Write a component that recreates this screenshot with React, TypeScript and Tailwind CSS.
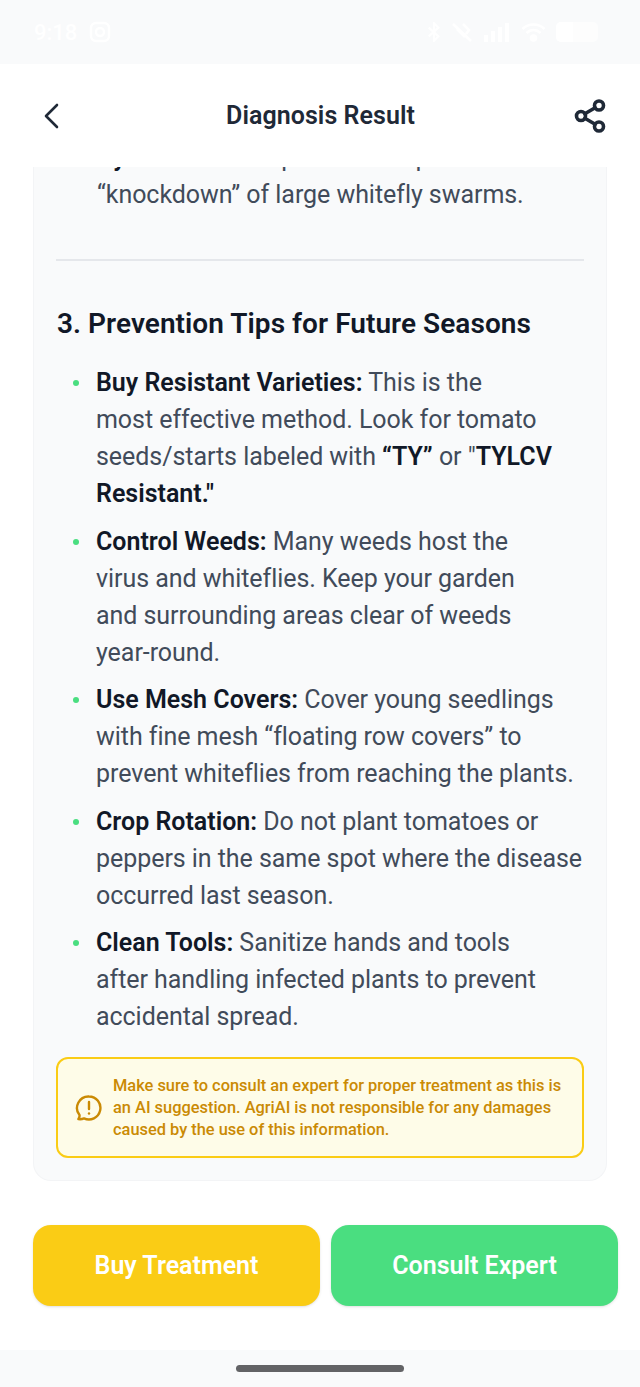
import React from "react";
import { Share2 } from "lucide-react";

const strong = "font-semibold text-[#111827] tracking-[0px]";

const tips = [
  { title: "Buy Resistant Varieties:", body: (
    <>This is the<br />most effective method. Look for tomato<br />seeds/starts labeled with <b className={strong}>“TY”</b> or "<b className={strong}>TYLCV</b><br /><b className={strong}>Resistant."</b></>
  ) },
  { title: "Control Weeds:", body: <>Many weeds host the<br />virus and whiteflies. Keep your garden<br />and surrounding areas clear of weeds<br />year-round.</> },
  { title: "Use Mesh Covers:", body: <>Cover young seedlings<br />with fine mesh “floating row covers” to<br />prevent whiteflies from reaching the plants.</> },
  { title: "Crop Rotation:", body: <>Do not plant tomatoes or<br />peppers in the same spot where the disease<br />occurred last season.</> },
  { title: "Clean Tools:", body: <>Sanitize hands and tools<br />after handling infected plants to prevent<br />accidental spread.</> },
];

function StatusBar() {
  return (
    <div className="h-16 shrink-0 bg-[#f9fafb] flex items-center justify-between pl-[34px] pr-[42px] text-white">
      <div className="flex items-center gap-3">
        <span className="text-[22px] font-medium">9:18</span>
        <svg width="22" height="24" viewBox="0 0 22 24" fill="none" stroke="currentColor" strokeWidth="2.4">
          <rect x="2" y="3" width="18" height="18" rx="5" />
          <circle cx="11" cy="12" r="4" />
        </svg>
      </div>
      <div className="flex items-center gap-[10px]">
        <svg width="14" height="20" viewBox="0 0 16 22" fill="none" stroke="currentColor" strokeWidth="2.4">
          <path d="M2 6l11 10-5 5V1l5 5L2 16" />
        </svg>
        <svg width="22" height="22" viewBox="0 0 22 22" fill="none" stroke="currentColor" strokeWidth="2.6">
          <path d="M2 3l18 17M6 8l8 8M12 3l6 6-3 4" />
        </svg>
        <svg width="28" height="22" viewBox="0 0 28 22" fill="currentColor">
          <rect x="1" y="14" width="4" height="7" />
          <rect x="8" y="10" width="4" height="11" />
          <rect x="15" y="6" width="4" height="15" />
          <rect x="22" y="2" width="4" height="19" />
        </svg>
        <svg width="25" height="20" viewBox="0 0 24 20" fill="none" stroke="currentColor" strokeWidth="2.6">
          <path d="M1 7c6-6 16-6 22 0M5 11c4-4 10-4 14 0" />
          <circle cx="12" cy="16" r="2.5" fill="currentColor" />
        </svg>
        <div className="w-[42px] h-[20px] rounded-[5px] bg-white/60 overflow-hidden">
          <div className="w-[17px] h-full bg-white" />
        </div>
      </div>
    </div>
  );
}

export default function App() {
  return (
    <div className="w-[640px] h-[1387px] bg-white flex flex-col overflow-hidden font-['Roboto',sans-serif]">
      <StatusBar />

      <header className="h-[103px] shrink-0 flex items-center justify-between pl-[43px] pr-[32px] pt-[1px]">
        <span className="w-[26px]">
          <svg width="16" height="26" viewBox="0 0 16 26" fill="none" stroke="#1f2937" strokeWidth="2.6" strokeLinecap="round" strokeLinejoin="round">
            <path d="M14 2L3 13l11 11" />
          </svg>
        </span>
        <h1 className="text-[25px] font-semibold text-[#1f2937] tracking-[0.05px]">Diagnosis Result</h1>
        <Share2 size={36} strokeWidth={2.4} className="text-[#1f2937]" />
      </header>

      <main className="h-[1014px] shrink-0 overflow-hidden px-[33px]">
        <section className="h-full bg-[#f9fafb] rounded-b-[18px] border-b border-x border-[#f3f4f6] px-[22px] flex flex-col">
          <p className="mt-[-28px] pl-[41px] text-[25px] leading-[37px] text-[#414b5a] tracking-[-0.05px]">
            <b className={strong}>Pyrethrin:</b> Best spot use for quick
            <br />
            “knockdown” of large whitefly swarms.
          </p>
          <hr className="mt-[46px] border-0 h-[2px] bg-[#e5e7eb]" />

          <h2 className="mt-[44px] pl-[1px] text-[28px] leading-[38px] font-semibold text-[#111827] tracking-[0.05px]">
            3. Prevention Tips for Future Seasons
          </h2>

          <ul className="mt-[21px] flex flex-col gap-[10.5px]">
            {tips.map((t) => (
              <li key={t.title} className="flex text-[25px] leading-[37px] text-[#414b5a] tracking-[-0.05px]">
                <span className="w-[40px] shrink-0 pl-[17px] pt-[16px]">
                  <span className="block w-[6px] h-[6px] rounded-full bg-[#4ade80]" />
                </span>
                <div>
                  <b className={strong}>{t.title}</b> {t.body}
                </div>
              </li>
            ))}
          </ul>

          <aside className="mt-[22px] h-[101px] rounded-[12px] border-2 border-[#facc15] bg-[#fefce8] flex items-center pl-[17px] pr-[6px] gap-[10px]">
            <svg width="28" height="28" viewBox="0 0 28 28" fill="none" stroke="#ca8a04" strokeWidth="2.4" className="shrink-0">
              <path d="M14 2.5a11.5 11.5 0 1 1-5 21.9c-2 .9-3.8 1-5.6.7 1-1.3 1.3-2.6 1.1-4A11.5 11.5 0 0 1 14 2.5z" strokeLinejoin="round" />
              <path d="M14 8v7" strokeLinecap="round" />
              <circle cx="14" cy="19.5" r="1.2" fill="#ca8a04" stroke="none" />
            </svg>
            <p className="text-[16.4px] leading-[22px] font-medium text-[#ca8a04]">
              Make sure to consult an expert for proper treatment as this is an AI suggestion. AgriAI is not responsible for any damages caused by the use of this information.
            </p>
          </aside>
        </section>
      </main>

      <div className="h-[169px] shrink-0 pl-[33px] pr-[22px] pt-[44px] flex gap-[11px] items-start">
        <button className="flex-1 h-[81px] rounded-[18px] bg-[#facc15] text-white text-[25px] font-semibold shadow-sm">Buy Treatment</button>
        <button className="flex-1 h-[81px] rounded-[18px] bg-[#4ade80] text-white text-[25px] font-semibold shadow-sm">Consult Expert</button>
      </div>

      <div className="flex-1 bg-[#f9fafb] flex justify-center pt-[15px]">
        <div className="w-[168px] h-[7px] rounded-full bg-[#636366]" />
      </div>
    </div>
  );
}
